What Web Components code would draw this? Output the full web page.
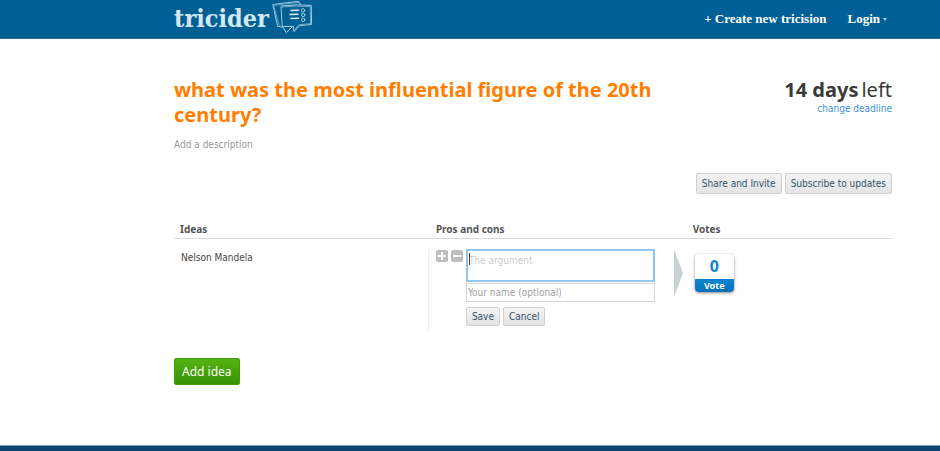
<!DOCTYPE html>
<html lang="en">
<head>
    <meta charset="UTF-8">
    <meta name="viewport" content="width=device-width, initial-scale=1">
    <title>tricider</title>
    <style>
        body {
            margin: 0;
            min-height: 100vh;
            display: flex;
            flex-direction: column;
            background-color: #fff;
            color: #444;
            font-family: "DejaVu Sans Condensed", "DejaVu Sans", sans-serif;
            font-size: 10px;
            line-height: 14px;
            --head-font: "Noto Sans", "Open Sans", sans-serif;
            --side-left: 174px;
            --side-right: 48px;
        }

        main {
            flex: 1;
            padding: 38px var(--side-right) 40px var(--side-left);
        }

        .toolbar {
            display: flex;
            justify-content: flex-end;
            gap: 3px;
            margin: 21px 0 28px;
        }

        footer {
            flex: none;
            height: 6px;
            background-color: #0b456f;
            border-top: 1px solid #7fa0b7;
            box-sizing: border-box;
        }
    </style>
</head>
<body>
    <tri-header></tri-header>
    <main>
        <tri-question days="14">what was the most influential figure of the 20th century?</tri-question>
        <div class="toolbar">
            <tri-button>Share and Invite</tri-button>
            <tri-button>Subscribe to updates</tri-button>
        </div>
        <tri-ideas idea="Nelson Mandela" votes="0"></tri-ideas>
        <tri-button kind="primary">Add idea</tri-button>
    </main>
    <footer></footer>

    <script>
        class TriLogo extends HTMLElement {
            constructor() {
                super();
                this.attachShadow({mode: "open"});
            }

            connectedCallback() {
                this.shadowRoot.innerHTML = `
                <style>
                    :host {
                        display: block;
                    }
                    a {
                        display: flex;
                        align-items: flex-start;
                        gap: 3px;
                        color: #d5e7f1;
                        font: bold 25px/36px "DejaVu Serif Condensed", "DejaVu Serif", serif;
                        text-decoration: none;
                    }
                    svg {
                        display: block;
                    }
                </style>
                <a href="#">
                    <span>tricider</span>
                    <svg width="41" height="34" viewBox="0 0 41 34" fill="none" stroke="#a9cce0" stroke-width="1" stroke-linejoin="round" stroke-linecap="round" aria-hidden="true">
                        <path d="M10 26 L5.6 25.4 L0.8 3.6 Q14 1.6 26.6 0.4 L28.4 3.4"/>
                        <path d="M1.6 4.6 L7.2 24.2 M2 4.2 L26.8 1.4" stroke="#6fa6c6"/>
                        <path d="M9.4 5 Q24 3 39.2 4.4 L39.6 23.4 L27.4 24.8 L22 30.6 L21.4 25.4 L10.6 25.6 Z"/>
                        <path d="M10.4 6 Q25 4.4 38.2 5.6 L38.6 22.6 L26.6 23.8 L22.6 29" stroke="#6fa6c6"/>
                        <path d="M10.8 26 L14.2 31.6 L20 26"/>
                        <path d="M19 9.5 L26.5 9.2 M18 13.5 L26 13.3 M19 17.5 L26.5 17.2" stroke="#e0eef5" stroke-width="1.5"/>
                        <circle cx="31" cy="9.4" r="1.7"/>
                        <circle cx="31.2" cy="14" r="1.7"/>
                        <circle cx="31.2" cy="18.8" r="1.7"/>
                    </svg>
                </a>
                `;
            }
        }

        class TriHeader extends HTMLElement {
            constructor() {
                super();
                this.attachShadow({mode: "open"});
            }

            connectedCallback() {
                this.shadowRoot.innerHTML = `
                <style>
                    :host {
                        display: flex;
                        justify-content: space-between;
                        align-items: center;
                        height: 38px;
                        padding: 0 53px 0 var(--side-left);
                        background-color: #005f94;
                        border-bottom: 1px solid #2a76a3;
                        box-shadow: inset 0 -1px #00527f;
                    }
                    nav {
                        display: flex;
                        gap: 21px;
                    }
                    a {
                        display: flex;
                        align-items: center;
                        gap: 3px;
                        color: #fff;
                        font: bold 13px/16px "Liberation Serif", serif;
                        text-decoration: none;
                    }
                    .caret {
                        border: 2px solid transparent;
                        border-top: 3px solid #a9cce0;
                        border-bottom: 0;
                    }
                </style>
                <tri-logo></tri-logo>
                <nav>
                    <a href="#">+ Create new tricision</a>
                    <a href="#">Login<span class="caret"></span></a>
                </nav>
                `;
            }
        }

        class TriQuestion extends HTMLElement {
            constructor() {
                super();
                this.attachShadow({mode: "open"});
            }

            connectedCallback() {
                const days = this.getAttribute("days") || "0";

                this.shadowRoot.innerHTML = `
                <style>
                    :host {
                        display: flex;
                        justify-content: space-between;
                        align-items: flex-start;
                    }
                    .question {
                        flex: 0 1 500px;
                    }
                    h1 {
                        margin: 0 0 11px;
                        color: #ff7e00;
                        font: bold 20px/25px var(--head-font);
                    }
                    .desc {
                        color: #999;
                        text-decoration: none;
                    }
                    .deadline {
                        text-align: right;
                    }
                    .left {
                        display: flex;
                        justify-content: flex-end;
                        gap: 3px;
                        margin: 0;
                        color: #3a3a3a;
                        font: 20px/25px var(--head-font);
                    }
                    .change {
                        color: #3c92d6;
                        text-decoration: none;
                    }
                </style>
                <div class="question">
                    <h1><slot></slot></h1>
                    <a class="desc" href="#">Add a description</a>
                </div>
                <div class="deadline">
                    <p class="left"><b>${days} days</b> <span>left</span></p>
                    <a class="change" href="#">change deadline</a>
                </div>
                `;
            }
        }

        class TriButton extends HTMLElement {
            constructor() {
                super();
                this.attachShadow({mode: "open"});
            }

            connectedCallback() {
                this.shadowRoot.innerHTML = `
                <style>
                    :host {
                        display: inline-block;
                        vertical-align: top;
                    }
                    button {
                        display: block;
                        padding: 3px 5px 2px;
                        border: 1px solid #d0d0d0;
                        border-radius: 2px;
                        background: linear-gradient(#f3f3f3, #e4e4e4);
                        color: #34536b;
                        font: inherit;
                        cursor: pointer;
                    }
                    :host([kind="primary"]) button {
                        padding: 4px 7px;
                        border-color: #3f9a10;
                        background: linear-gradient(#55b412, #379103);
                        color: #fff;
                        font: 12px/17px var(--head-font);
                    }
                    :host([kind="small"]) button {
                        padding: 2px 5px 1px;
                    }
                </style>
                <button type="button"><slot></slot></button>
                `;
            }
        }

        class TriArgument extends HTMLElement {
            constructor() {
                super();
                this.attachShadow({mode: "open"});
            }

            connectedCallback() {
                this.shadowRoot.innerHTML = `
                <style>
                    :host {
                        display: flex;
                        align-items: flex-start;
                        gap: 3px;
                    }
                    .sign {
                        display: block;
                        margin-top: 1px;
                        padding: 0;
                        border: 0;
                        background: none;
                        cursor: pointer;
                    }
                    .sign svg {
                        display: block;
                    }
                    form {
                        flex: 1;
                        display: flex;
                        flex-direction: column;
                        gap: 1px;
                    }
                    textarea, input {
                        display: block;
                        width: 100%;
                        box-sizing: border-box;
                        margin: 0;
                        border: 1px solid #d4d4d4;
                        border-radius: 0;
                        background-color: #fff;
                        color: #444;
                        font: inherit;
                        outline: 0;
                    }
                    textarea {
                        height: 33px;
                        padding: 3px 1px;
                        border: 2px solid #91c6e8;
                        resize: none;
                    }
                    textarea::placeholder {
                        color: #ccc;
                    }
                    input {
                        height: 19px;
                        padding: 1px;
                    }
                    input::placeholder {
                        color: #a0a0a0;
                    }
                    .field {
                        position: relative;
                    }
                    .cursor {
                        position: absolute;
                        top: 4px;
                        left: 3px;
                        width: 1px;
                        height: 12px;
                        background-color: #444;
                    }
                    .actions {
                        display: flex;
                        gap: 3px;
                        margin-top: 4px;
                    }
                </style>
                <button class="sign" type="button" aria-label="Pro">
                    <svg width="12" height="12" viewBox="0 0 12 12">
                        <rect width="12" height="12" rx="2" fill="#bdbdbd"/>
                        <path d="M6 2 V10 M2 6 H10" stroke="#fff" stroke-width="2"/>
                    </svg>
                </button>
                <button class="sign" type="button" aria-label="Con">
                    <svg width="12" height="12" viewBox="0 0 12 12">
                        <rect width="12" height="12" rx="2" fill="#bdbdbd"/>
                        <path d="M2 6 H10" stroke="#fff" stroke-width="2"/>
                    </svg>
                </button>
                <form>
                    <div class="field">
                        <textarea aria-label="The argument" placeholder="The argument"></textarea>
                        <span class="cursor"></span>
                    </div>
                    <input type="text" aria-label="Your name" placeholder="Your name (optional)">
                    <div class="actions">
                        <tri-button kind="small">Save</tri-button>
                        <tri-button kind="small">Cancel</tri-button>
                    </div>
                </form>
                `;
            }
        }

        class TriVote extends HTMLElement {
            constructor() {
                super();
                this.attachShadow({mode: "open"});
            }

            connectedCallback() {
                const count = this.getAttribute("count") || "0";

                this.shadowRoot.innerHTML = `
                <style>
                    :host {
                        display: flex;
                        align-items: flex-start;
                        gap: 12px;
                    }
                    .arrow {
                        display: block;
                    }
                    button {
                        display: block;
                        width: 39px;
                        margin-top: 5px;
                        padding: 0;
                        border: 0;
                        border-radius: 4px;
                        overflow: hidden;
                        background-color: #fff;
                        box-shadow: 0 1px 3px #888;
                        font: bold 16px/25px var(--head-font);
                        color: #0f82d0;
                        cursor: pointer;
                    }
                    span {
                        display: block;
                    }
                    .label {
                        background: linear-gradient(#0f86d2, #0870b6);
                        color: #fff;
                        font-size: 9px;
                        line-height: 13px;
                    }
                </style>
                <svg class="arrow" width="9" height="48" viewBox="0 0 9 48" aria-hidden="true">
                    <path d="M0 0 L9 24 L0 48 Z" fill="#c9d1d5"/>
                </svg>
                <button type="button">
                    <span>${count}</span>
                    <span class="label">Vote</span>
                </button>
                `;
            }
        }

        class TriIdeas extends HTMLElement {
            constructor() {
                super();
                this.attachShadow({mode: "open"});
            }

            connectedCallback() {
                const idea = this.getAttribute("idea") || "";
                const votes = this.getAttribute("votes") || "0";

                this.shadowRoot.innerHTML = `
                <style>
                    :host {
                        display: block;
                        margin-bottom: 25px;
                    }
                    table {
                        width: 100%;
                        border-collapse: separate;
                        border-spacing: 0;
                        table-layout: fixed;
                    }
                    th, td {
                        box-sizing: border-box;
                    }
                    .ideas {
                        width: 35.5%;
                    }
                    .votes {
                        width: 30.4%;
                    }
                    th {
                        padding: 0 0 2px 7px;
                        border-bottom: 1px solid #d8d8d8;
                        color: #555;
                        font: bold 10px/14px var(--head-font);
                        text-align: left;
                    }
                    th.ideas {
                        padding-left: 6px;
                    }
                    th.votes {
                        padding-left: 19px;
                    }
                    td {
                        padding: 10px 0 0;
                        vertical-align: top;
                    }
                    .name {
                        min-height: 82px;
                        padding: 2px 7px 0;
                        border-right: 1px solid #efefef;
                    }
                    tri-argument {
                        padding: 0 19px 0 7px;
                    }
                </style>
                <table>
                    <thead>
                        <tr>
                            <th class="ideas">Ideas</th>
                            <th>Pros and cons</th>
                            <th class="votes">Votes</th>
                        </tr>
                    </thead>
                    <tbody>
                        <tr>
                            <td><div class="name">${idea}</div></td>
                            <td><tri-argument></tri-argument></td>
                            <td><tri-vote count="${votes}"></tri-vote></td>
                        </tr>
                    </tbody>
                </table>
                `;
            }
        }

        customElements.define('tri-logo', TriLogo);
        customElements.define('tri-header', TriHeader);
        customElements.define('tri-question', TriQuestion);
        customElements.define('tri-button', TriButton);
        customElements.define('tri-argument', TriArgument);
        customElements.define('tri-vote', TriVote);
        customElements.define('tri-ideas', TriIdeas);
    </script>
</body>
</html>
